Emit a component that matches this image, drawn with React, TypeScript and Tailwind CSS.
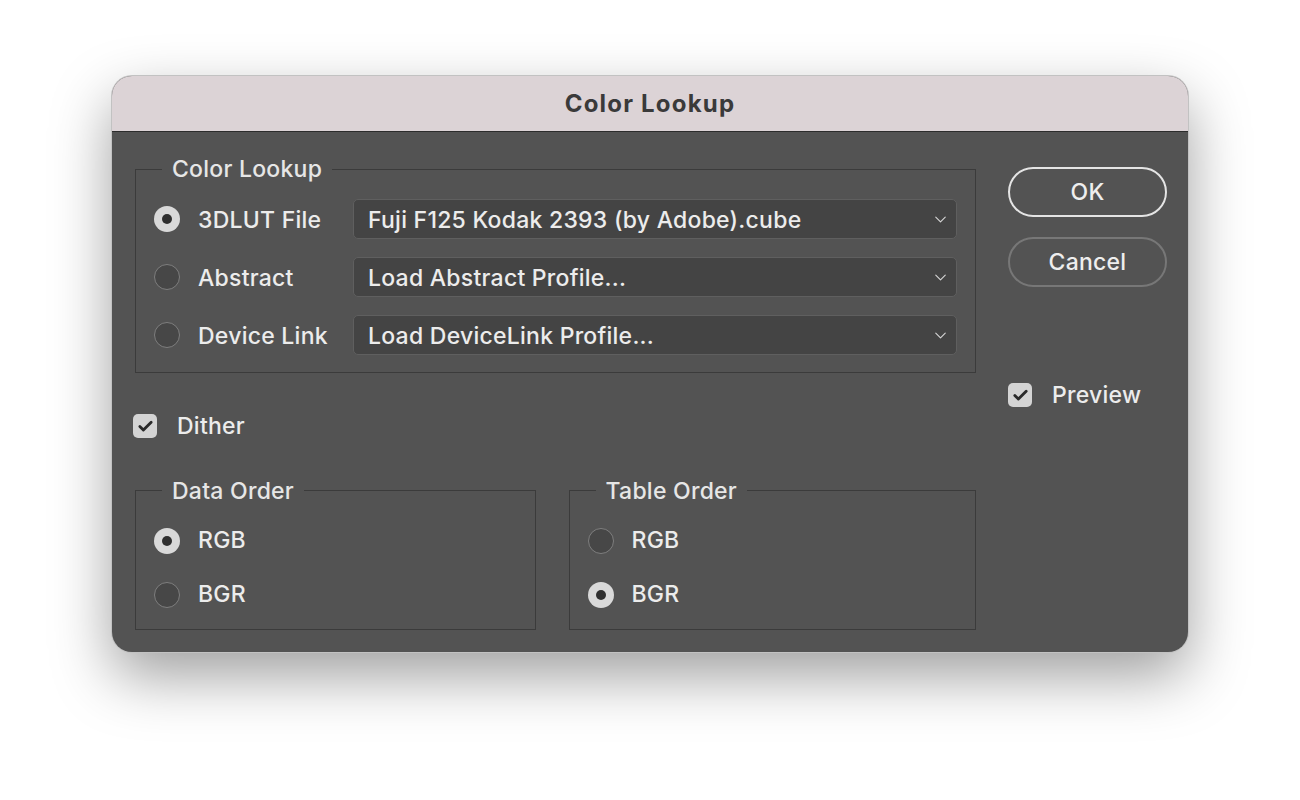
import { Check, ChevronDown } from "lucide-react";

const font = { fontFamily: "Inter, 'Noto Sans', 'Liberation Sans', sans-serif" };

function Radio({ on }: { on?: boolean }) {
  return on ? (
    <span className="flex h-[26px] w-[26px] shrink-0 items-center justify-center rounded-full bg-[#d9d9d9]">
      <span className="h-[10px] w-[10px] rounded-full bg-[#2f2f2f]" />
    </span>
  ) : (
    <span className="h-[26px] w-[26px] shrink-0 rounded-full border-[1.5px] border-[#7e7e7e] bg-[#474747]" />
  );
}

function Checkbox() {
  return (
    <span className="flex h-[24px] w-[24px] shrink-0 items-center justify-center rounded-[5px] bg-[#d4d4d4]">
      <Check size={17} strokeWidth={4} color="#2a2a2a" />
    </span>
  );
}

function Dropdown({ text }: { text: string }) {
  return (
    <div className="flex h-[40px] flex-1 items-center justify-between rounded-[5px] border border-[#5f5f5f] bg-[#444444] pl-[14px] pr-[6px]">
      <span className="pt-[2px]">{text}</span>
      <ChevronDown size={19} strokeWidth={1.4} color="#d6d6d6" />
    </div>
  );
}

function Group({
  title,
  className,
  children,
}: {
  title: string;
  className: string;
  children: React.ReactNode;
}) {
  return (
    <fieldset className={`border border-[#3b3b3b] ${className}`}>
      <legend className="ml-[26px] px-[10px] leading-[22px] text-[#e6e6e6]">{title}</legend>
      {children}
    </fieldset>
  );
}

const lookups = [
  { label: "3DLUT File", value: "Fuji F125 Kodak 2393 (by Adobe).cube", on: true },
  { label: "Abstract", value: "Load Abstract Profile...", on: false },
  { label: "Device Link", value: "Load DeviceLink Profile...", on: false },
];

function OrderRows({ selected }: { selected: "RGB" | "BGR" }) {
  return (
    <div className="mt-[26px] flex flex-col gap-[28px] pb-[21px] pl-[18px]">
      {(["RGB", "BGR"] as const).map((v) => (
        <div key={v} className="flex h-[26px] items-center gap-[18px]">
          <Radio on={v === selected} />
          <span>{v}</span>
        </div>
      ))}
    </div>
  );
}

export default function App() {
  return (
    <div className="h-[800px] w-[1300px] overflow-hidden bg-white pl-[112px] pt-[76px]" style={font}>
      <div className="h-[576px] w-[1076px] overflow-hidden rounded-[20px] bg-[#535353] shadow-[0_24px_60px_rgba(0,0,0,0.38)] ring-1 ring-[#c2c2c2]">
        <div className="flex h-[55px] items-center justify-center bg-[#dcd3d6] text-[24px] font-bold tracking-[1.2px] text-[#3a3a3a]">
          Color Lookup
        </div>
        <div className="h-px bg-[#2c2c2c]" />
        <div className="flex pl-[23px] text-[23px] font-medium tracking-[0.25px] text-[#ececec]">
          <div className="mt-[26px] flex w-[841px] flex-col">
            <Group title="Color Lookup" className="pb-[17px]">
              <div className="mt-[19px] flex flex-col gap-[18px] px-[18px]">
                {lookups.map((l) => (
                  <div key={l.label} className="flex items-center">
                    <Radio on={l.on} />
                    <span className="ml-[18px] w-[155px] pt-[2px]">{l.label}</span>
                    <Dropdown text={l.value} />
                  </div>
                ))}
              </div>
            </Group>

            <div className="ml-[-2px] mt-[36px] flex items-center gap-[20px]">
              <Checkbox />
              <span>Dither</span>
            </div>

            <div className="mt-[36px] flex gap-[33px]">
              <Group title="Data Order" className="w-[401px]">
                <OrderRows selected="RGB" />
              </Group>
              <Group title="Table Order" className="w-[408px]">
                <OrderRows selected="BGR" />
              </Group>
            </div>
          </div>

          <div className="ml-[32px] mt-[35px] flex w-[159px] flex-col">
            <button className="flex h-[50px] items-center justify-center rounded-full border-2 border-[#e4e4e4] text-[#eeeeee]">
              OK
            </button>
            <button className="mt-[20px] flex h-[50px] items-center justify-center rounded-full border-2 border-[#777777] text-[#eeeeee]">
              Cancel
            </button>
            <div className="mt-[91px] flex items-center gap-[20px]">
              <Checkbox />
              <span>Preview</span>
            </div>
          </div>
        </div>
      </div>
    </div>
  );
}
